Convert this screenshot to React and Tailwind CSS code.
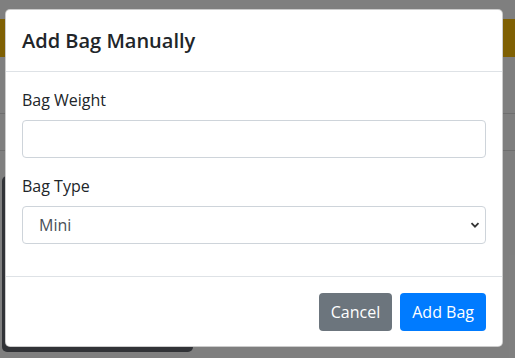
import React from 'react';

const font = { fontFamily: '"Open Sans", "Noto Sans", sans-serif' };

const App = () => {
  return (
    <div className="relative w-[515px] h-[358px] overflow-hidden bg-white" style={font}>
      {/* Page behind the modal */}
      <div className="h-[19px]" />
      <div className="h-[38px] bg-[#ffc107]" />
      <div className="h-[56px]" />
      <div className="h-px bg-[#dcdcdc]" />
      <div className="h-[36px]" />
      <div className="h-px bg-[#dcdcdc]" />
      <div className="h-[25px]" />
      <div className="ml-[2px] w-[191px] h-[176px] rounded-[5px] bg-[#62676f]" />

      {/* Backdrop */}
      <div className="absolute inset-0 bg-black/50" />

      {/* Modal */}
      <div className="absolute top-[9px] left-[5px] w-[498px] bg-white border border-black/20 rounded-[5px] text-[#212529]">
        <div className="flex items-center h-[62px] px-4 border-b border-[#dee2e6]">
          <h5 className="text-[20px] leading-[30px] font-semibold">Add Bag Manually</h5>
        </div>

        <div className="p-4">
          <div className="mb-4">
            <label className="block mb-2 text-base leading-6">Bag Weight</label>
            <input
              type="text"
              className="block w-full h-[38px] px-3 border border-[#ced4da] rounded bg-white text-[#495057] outline-none"
            />
          </div>
          <div className="mb-4">
            <label className="block mb-2 text-base leading-6">Bag Type</label>
            <div className="relative">
              <select className="block w-full h-[38px] pl-[16px] pr-8 border border-[#ced4da] rounded bg-white text-[#495057] text-base appearance-none outline-none">
                <option>Mini</option>
                <option>Standard</option>
                <option>Large</option>
              </select>
              <svg
                className="absolute right-[6px] top-1/2 -translate-y-1/2 w-[10px] h-[10px] pointer-events-none"
                viewBox="0 0 10 10"
              >
                <path d="M1.5 3.2 L5 6.7 L8.5 3.2" fill="none" stroke="#333" strokeWidth="1.8" />
              </svg>
            </div>
          </div>
        </div>

        <div className="flex justify-end items-center gap-2 h-[70px] px-4 border-t border-[#dee2e6]">
          <button className="h-[38px] px-3 rounded bg-[#6c757d] text-white text-base">Cancel</button>
          <button className="h-[38px] px-3 rounded bg-[#007bff] text-white text-base">Add Bag</button>
        </div>
      </div>
    </div>
  );
};

export default App;
